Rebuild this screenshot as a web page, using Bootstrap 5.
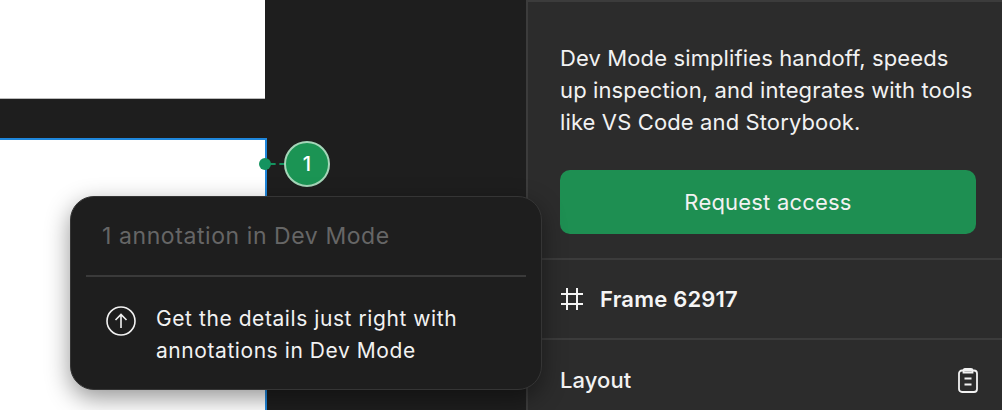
<!DOCTYPE html>
<html lang="en">
<head>
<meta charset="utf-8">
<title>Dev Mode</title>
<link href="https://cdn.jsdelivr.net/npm/bootstrap@5.3.0/dist/css/bootstrap.min.css" rel="stylesheet">
<style>
html,body{width:1002px;height:410px;overflow:hidden;margin:0;background:#1e1e1e;font-family:Inter,"Liberation Sans",sans-serif;color:#fff}
.stage{width:1002px;height:410px}
.canvas-area{width:526px;flex:none;position:relative;background:#1e1e1e}
.frame-a{position:absolute;left:0;top:0;width:265px;height:99px;background:#fff;border-bottom:1px solid #bbb}
.frame-b{position:absolute;left:-2px;top:138px;width:269px;height:290px;background:#fff;border:2px solid #1f87dc}
.pin-dot{position:absolute;left:258.5px;top:158px;width:12px;height:12px;border-radius:50%;background:#14935f}
.pin-dash{position:absolute;left:270px;top:163px;width:15px;border-top:2px dashed #14935f}
.pin{position:absolute;left:284px;top:141px;width:46px;height:46px;border-radius:50%;background:#1b9454;border:2px solid #a5d6b9;font-size:20px;font-weight:500}
.pop{position:absolute;left:70px;top:196px;width:472px;height:194px;background:#1e1e1e;border:1px solid #353535;border-radius:24px;box-shadow:0 8px 24px rgba(0,0,0,.42);z-index:3}
.pop-head{height:80px;margin:0 15px;padding-left:16px;border-bottom:2px solid #3a3a3a;font-size:23px;color:#666;letter-spacing:.58px}
.pop-body{padding:26px 0 0 35px;gap:20px;font-size:21px;line-height:32px;letter-spacing:.57px;color:#f2f2f2}
.pop-ico{margin-top:3px;flex:none}
.side{width:476px;flex:none;background:#2c2c2c;border-left:2px solid #3c3c3c;border-top:2px solid #3c3c3c;height:410px}
.intro{padding:40px 26px 24px 32px;border-bottom:2px solid #3c3c3c;height:258px}
.intro p{font-size:22px;line-height:32px;letter-spacing:.12px;margin:0 0 32px;color:#f2f2f2;white-space:nowrap}
.req{width:416px;height:64px;background:#1e8f52;border:0;border-radius:10px;color:#f2f2f2;font-size:22px;letter-spacing:.2px;--bs-btn-hover-bg:#1e8f52;--bs-btn-hover-color:#f2f2f2}
.row-frame{height:80px;padding-left:33px;gap:17px;border-bottom:2px solid #3c3c3c;font-size:22px;font-weight:600;letter-spacing:.2px;color:#f5f5f5}
.row-layout{height:80px;padding:0 24px 0 32px;font-size:22px;font-weight:500;letter-spacing:.1px;color:#f2f2f2}
</style>
</head>
<body>
<div class="stage d-flex">
  <div class="canvas-area">
    <div class="frame-a"></div>
    <div class="frame-b"></div>
    <div class="pin-dash"></div>
    <div class="pin-dot"></div>
    <div class="pin d-flex align-items-center justify-content-center">1</div>
    <div class="pop">
      <div class="pop-head d-flex align-items-center">1 annotation in Dev Mode</div>
      <div class="pop-body d-flex">
        <svg class="pop-ico" width="30" height="30" viewBox="0 0 30 30" fill="none" stroke="#f2f2f2" stroke-width="1.6"><circle cx="15" cy="15" r="14"/><path d="M15 22V8.500M9.500 14 15 8.500 20.500 14"/></svg>
        <div>Get the details just right with<br>annotations in Dev Mode</div>
      </div>
    </div>
  </div>
  <div class="side">
    <div class="intro">
      <p>Dev Mode simplifies handoff, speeds<br>up inspection, and integrates with tools<br>like VS Code and Storybook.</p>
      <button class="btn req d-flex align-items-center justify-content-center" type="button">Request access</button>
    </div>
    <div class="row-frame d-flex align-items-center">
      <svg width="22" height="22" viewBox="0 0 22 22" fill="none" stroke="#f5f5f5" stroke-width="2"><path d="M0 6h22M0 16h22M6 0v22M16 0v22"/></svg>
      <span>Frame 62917</span>
    </div>
    <div class="row-layout d-flex align-items-center justify-content-between">
      <span>Layout</span>
      <svg width="20" height="25" viewBox="0 0 20 25" fill="none" stroke="#f2f2f2" stroke-width="1.8"><rect x="1" y="2.500" width="18" height="21.500" rx="3"/><path d="M5.500 2.500C5.500 1.500 6 1 7 1h6c1 0 1.500.5 1.500 1.500V4.500H5.500z"/><path d="M6.500 10.500h7M6.500 16.500h7"/></svg>
    </div>
  </div>
</div>
<script src="https://cdn.jsdelivr.net/npm/bootstrap@5.3.0/dist/js/bootstrap.bundle.min.js"></script>
</body>
</html>
